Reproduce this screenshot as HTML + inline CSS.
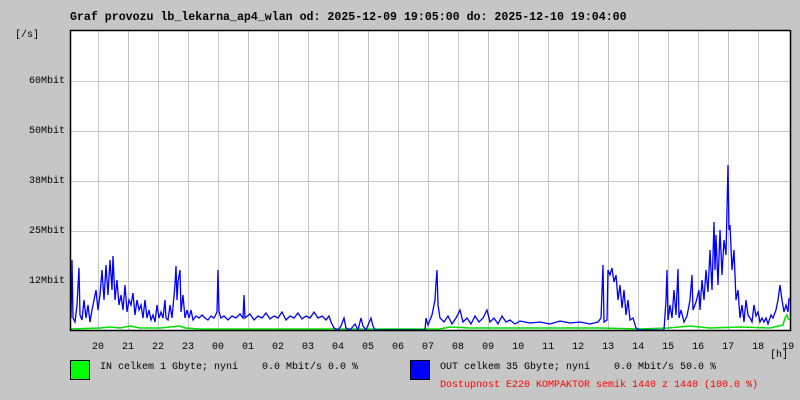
<!DOCTYPE html>
<html><head><meta charset="utf-8"><style>
body{margin:0;width:800px;height:400px;background:#c6c6c6;position:relative;overflow:hidden;font-family:"Liberation Mono",monospace;font-size:10px;color:#000}
.t{position:absolute;white-space:pre;line-height:12px}
.r{text-align:right;width:60px}
</style></head><body>
<div class="t" style="left:70px;top:12px;font-weight:bold;font-size:11.6px">Graf provozu lb_lekarna_ap4_wlan od: 2025-12-09 19:05:00 do: 2025-12-10 19:04:00</div>
<div class="t" style="left:15px;top:30px">[/s]</div>
<div class="t r" style="left:5px;top:76px">60Mbit</div>
<div class="t r" style="left:5px;top:126px">50Mbit</div>
<div class="t r" style="left:5px;top:176px">38Mbit</div>
<div class="t r" style="left:5px;top:226px">25Mbit</div>
<div class="t r" style="left:5px;top:276px">12Mbit</div>
<svg style="position:absolute;left:0;top:0" width="800" height="400">
<rect x="70" y="30" width="720" height="300" fill="#fff"/>
<g stroke="#c6c6c6" stroke-width="1">
<path d="M98.5 30V330M128.5 30V330M158.5 30V330M188.5 30V330M218.5 30V330M248.5 30V330M278.5 30V330M308.5 30V330M338.5 30V330M368.5 30V330M398.5 30V330M428.5 30V330M458.5 30V330M488.5 30V330M518.5 30V330M548.5 30V330M578.5 30V330M608.5 30V330M638.5 30V330M668.5 30V330M698.5 30V330M728.5 30V330M758.5 30V330"/>
<path d="M70 81.5H790M70 131.5H790M70 181.5H790M70 231.5H790M70 281.5H790"/>
</g>
<polyline fill="none" stroke="#00e000" stroke-width="1.5" points="71,329 100,328 110,327 120,328 130,326 140,328 160,328 180,326 185,328 200,329 440,329 450,327 470,328 600,328 640,329 668,328 690,326 700,327 710,328 740,327 770,328 783,325 785,318 787,315 789,320"/>
<polyline fill="none" stroke="#0000ff" stroke-width="1.3" points="71,318 72,260 73,318 75,322 77,305 79,268 80,315 82,320 84,300 86,318 88,305 90,322 92,310 94,300 96,290 98,310 100,295 102,270 104,300 106,265 108,295 110,260 112,290 113,256 115,300 117,280 119,305 121,295 123,310 125,285 127,312 129,300 131,305 133,293 135,315 137,300 139,310 141,305 143,318 145,300 147,318 149,310 151,320 153,315 155,322 157,305 159,318 161,312 163,318 165,300 166,318 168,320 170,305 172,318 175,285 176,266 177,300 178,282 180,270 181,312 183,295 185,318 187,310 189,318 191,310 193,320 196,316 199,318 202,315 205,318 208,320 211,316 214,318 217,312 218,270 219,312 221,318 224,316 228,320 232,316 236,318 240,314 243,318 244,295 245,318 250,314 254,320 258,316 262,318 266,313 270,319 274,316 278,318 282,312 286,320 290,316 294,318 298,313 302,319 306,316 310,318 314,312 318,318 322,316 326,320 329,316 331,322 334,328 338,330 341,326 344,318 346,328 350,330 355,324 358,330 361,318 363,326 366,330 371,318 373,326 375,330 425,330 426,318 428,325 432,315 435,300 436,283 437,270 438,305 440,318 444,322 448,316 452,324 456,318 460,310 463,322 467,318 471,324 475,316 479,322 483,318 487,310 490,322 494,318 498,324 502,316 506,322 510,320 515,324 520,321 530,323 540,322 550,324 560,321 570,323 580,322 590,324 598,322 601,318 603,265 604,322 607,320 608,270 610,275 612,268 614,282 616,275 618,300 620,285 622,308 624,290 626,315 628,300 630,320 633,318 636,328 640,330 664,330 666,300 667,270 668,320 670,305 672,318 674,290 676,315 678,269 679,318 681,310 684,322 687,316 690,300 692,275 693,310 696,302 699,290 700,310 702,280 704,300 706,270 708,292 710,250 712,290 714,222 715,270 716,235 718,285 720,230 722,275 724,240 726,255 728,165 729,230 730,225 732,270 734,250 736,300 738,290 740,318 742,305 744,322 746,300 748,315 750,318 752,322 754,305 756,316 758,312 760,322 762,318 764,322 766,318 768,324 771,315 773,318 776,310 778,300 780,285 782,300 784,312 786,305 788,312 789,298"/>
<path d="M70.5 30V330.5H790.5V30M70 30.5H790" fill="none" stroke="#000" stroke-width="1.5"/>
<rect x="70.5" y="360.5" width="19" height="19" fill="#00ff00" stroke="#000"/>
<rect x="410.5" y="360.5" width="19" height="19" fill="#0000ff" stroke="#000"/>
</svg>
<div class="t" style="left:92px;top:342px;word-spacing:0">20   21   22   23   00   01   02   03   04   05   06   07   08   09   10   11   12   13   14   15   16   17   18   19</div>
<div class="t" style="left:770px;top:350px">[h]</div>
<div class="t" style="left:100px;top:362px">IN celkem 1 Gbyte; nyní    0.0 Mbit/s 0.0 %</div>
<div class="t" style="left:440px;top:362px">OUT celkem 35 Gbyte; nyní    0.0 Mbit/s 50.0 %</div>
<div class="t" style="left:440px;top:380px;color:#ff0000">Dostupnost E220 KOMPAKTOR semik 1440 z 1440 (100.0 %)</div>
</body></html>
